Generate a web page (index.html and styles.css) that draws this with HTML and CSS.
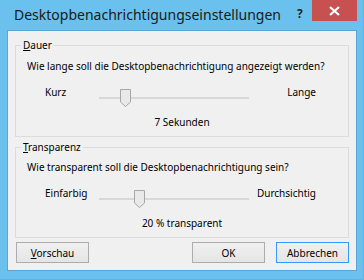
FILE: index.html
```html
<!DOCTYPE html>
<html lang="de">
<head>
    <meta charset="UTF-8">
    <title>Desktopbenachrichtigungseinstellungen</title>
    <link rel="stylesheet" href="styles.css">
</head>
<body>
    <div class="window">
        <div class="titlebar">
            <span class="title">Desktopbenachrichtigungseinstellungen</span>
            <span class="help">?</span>
            <span class="close">
                <svg width="11" height="10" viewBox="0 0 11 10">
                    <path d="M1 1 L10 9 M10 1 L1 9" stroke="#fff" stroke-width="2.2" fill="none"/>
                </svg>
            </span>
        </div>
        <div class="client">
            <fieldset class="group">
                <legend><u>D</u>auer</legend>
                <p class="question">Wie lange soll die Desktopbenachrichtigung angezeigt werden?</p>
                <div class="slider-row">
                    <span class="left-label">Kurz</span>
                    <div class="slider">
                        <div class="track"></div>
                        <svg class="thumb" style="left: 21px" width="11" height="18" viewBox="0 0 11 18">
                            <path d="M0.5 0.5 H10.5 V13 L5.5 17.5 L0.5 13 Z" fill="#e9e9e9" stroke="#a6a6a6"/>
                        </svg>
                    </div>
                    <span class="right-label">Lange</span>
                </div>
                <p class="value">7 Sekunden</p>
            </fieldset>

            <fieldset class="group second">
                <legend><u>T</u>ransparenz</legend>
                <p class="question">Wie transparent soll die Desktopbenachrichtigung sein?</p>
                <div class="slider-row">
                    <span class="left-label">Einfarbig</span>
                    <div class="slider">
                        <div class="track"></div>
                        <svg class="thumb" style="left: 35px" width="11" height="18" viewBox="0 0 11 18">
                            <path d="M0.5 0.5 H10.5 V13 L5.5 17.5 L0.5 13 Z" fill="#e9e9e9" stroke="#a6a6a6"/>
                        </svg>
                    </div>
                    <span class="right-label">Durchsichtig</span>
                </div>
                <p class="value">20 % transparent</p>
            </fieldset>

            <div class="buttons">
                <button class="btn"><u>V</u>orschau</button>
                <span class="spacer"></span>
                <button class="btn">OK</button>
                <button class="btn default">Abbrechen</button>
            </div>
        </div>
    </div>
</body>
</html>
```

FILE: styles.css
```css
body {
    margin: 0;
    background: #6bc1ed;
    font-family: 'Noto Sans', 'Open Sans', sans-serif;
    font-size: 10px;
    color: #000;
}
.window {
    width: 364px;
    height: 280px;
    box-sizing: border-box;
    padding: 0 7px;
    background: #6bc1ed;
    border-right: 1px solid #5fb3e2;
    border-bottom: 1px solid #5fb3e2;
}
.titlebar {
    height: 30px;
    position: relative;
}
.title {
    display: block;
    font-size: 14px;
    line-height: 20px;
    padding: 5px 0 0 7px;
    color: #1a1a1a;
    white-space: nowrap;
}
.help {
    position: absolute;
    top: 7px;
    left: 290px;
    font-size: 12px;
    font-weight: bold;
    line-height: 14px;
    color: #222;
}
.close {
    position: absolute;
    top: 0;
    right: -1px;
    width: 45px;
    height: 21px;
    background: #c75050;
    display: flex;
    align-items: center;
    justify-content: center;
}
.client {
    width: 350px;
    height: 241px;
    box-sizing: border-box;
    border: 1px solid #5aa5d3;
    background: #f0f0f0;
}
.group {
    margin: 6px 7px 0 7px;
    padding: 0 0 6px 0;
    border: 1px solid #dcdcdc;
    min-width: 0;
}
.group.second {
    margin-top: 2px;
}
legend {
    margin-left: 5px;
    padding: 0 2px;
    line-height: 16px;
}
.question {
    margin: 5px 0 0 11px;
    line-height: 16px;
    white-space: nowrap;
}
.second .question {
    margin-top: 4px;
}
.slider-row {
    display: flex;
    align-items: flex-start;
    margin-top: 10px;
    padding-left: 29px;
}
.left-label {
    width: 54px;
    line-height: 16px;
}
.right-label {
    width: 67px;
    text-align: right;
    line-height: 16px;
}
.slider {
    position: relative;
    width: 150px;
    height: 18px;
    margin-top: 5px;
}
.track {
    margin-top: 8px;
    height: 2px;
    background: #d8d8d8;
}
.thumb {
    position: absolute;
    top: 0;
}
.value {
    margin: 7px 0 0 0;
    text-align: center;
    line-height: 16px;
}
.buttons {
    display: flex;
    margin: 4px 7px 0 8px;
    gap: 11px;
}
.spacer {
    flex: 1;
}
.btn {
    width: 73px;
    height: 21px;
    padding: 0;
    flex: none;
    font-family: inherit;
    font-size: 10px;
    color: #000;
    border: 1px solid #acacac;
    background: linear-gradient(#f0f0f0, #e5e5e5);
}
.btn.default {
    border-color: #3399ff;
}
```
